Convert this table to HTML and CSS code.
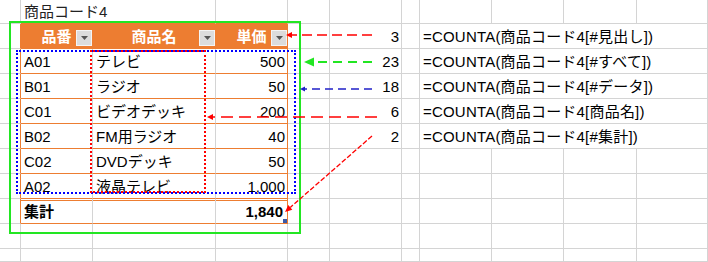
FILE: index.html
```html
<!DOCTYPE html>
<html lang="ja">
<head>
<meta charset="utf-8">
<link rel="stylesheet" href="styles.css">
</head>
<body>
<div class="sheet">
  <!-- row 0 -->
  <div class="c"></div>
  <div class="c span2 otop title">商品コード4</div>
  <div class="c otop"></div>
  <div class="c"></div><div class="c"></div><div class="c"></div><div class="c"></div><div class="c"></div><div class="c"></div><div class="c"></div>
  <!-- row 1 header -->
  <div class="c oleft"></div>
  <div class="c th"><span></span><span class="tht">品番</span><span class="ddw"><span class="dd"><svg width="7" height="4" viewBox="0 0 7 4"><path d="M0 0H7L3.5 4Z" fill="#555"/></svg></span></span></div>
  <div class="c th"><span></span><span class="tht">商品名</span><span class="ddw"><span class="dd"><svg width="7" height="4" viewBox="0 0 7 4"><path d="M0 0H7L3.5 4Z" fill="#555"/></svg></span></span></div>
  <div class="c th"><span></span><span class="tht">単価</span><span class="ddw"><span class="dd"><svg width="7" height="4" viewBox="0 0 7 4"><path d="M0 0H7L3.5 4Z" fill="#555"/></svg></span></span></div>
  <div class="c"></div>
  <div class="c r">3</div>
  <div class="c"></div>
  <div class="c span4 f">=COUNTA(商品コード4[#見出し])</div>
  <!-- row 2 -->
  <div class="c oleft"></div>
  <div class="c td">A01</div>
  <div class="c td">テレビ</div>
  <div class="c td tdl r">500</div>
  <div class="c"></div>
  <div class="c r">23</div>
  <div class="c"></div>
  <div class="c span4 f">=COUNTA(商品コード4[#すべて])</div>
  <!-- row 3 -->
  <div class="c oleft"></div>
  <div class="c td">B01</div>
  <div class="c td">ラジオ</div>
  <div class="c td tdl r">50</div>
  <div class="c"></div>
  <div class="c r">18</div>
  <div class="c"></div>
  <div class="c span4 f">=COUNTA(商品コード4[#データ])</div>
  <!-- row 4 -->
  <div class="c oleft"></div>
  <div class="c td">C01</div>
  <div class="c td">ビデオデッキ</div>
  <div class="c td tdl r">200</div>
  <div class="c"></div>
  <div class="c r">6</div>
  <div class="c"></div>
  <div class="c span4 f">=COUNTA(商品コード4[商品名])</div>
  <!-- row 5 -->
  <div class="c oleft"></div>
  <div class="c td">B02</div>
  <div class="c td">FM用ラジオ</div>
  <div class="c td tdl r">40</div>
  <div class="c"></div>
  <div class="c r">2</div>
  <div class="c"></div>
  <div class="c span4 f">=COUNTA(商品コード4[#集計])</div>
  <!-- row 6 -->
  <div class="c oleft"></div>
  <div class="c td">C02</div>
  <div class="c td">DVDデッキ</div>
  <div class="c td tdl r">50</div>
  <div class="c"></div><div class="c"></div><div class="c"></div><div class="c"></div><div class="c"></div><div class="c"></div><div class="c"></div>
  <!-- row 7 -->
  <div class="c oleft"></div>
  <div class="c td">A02</div>
  <div class="c td">液晶テレビ</div>
  <div class="c td tdl r">1,000</div>
  <div class="c"></div><div class="c"></div><div class="c"></div><div class="c"></div><div class="c"></div><div class="c"></div><div class="c"></div>
  <!-- row 8 total -->
  <div class="c oleft"></div>
  <div class="c tot">集計</div>
  <div class="c tot"></div>
  <div class="c tot tdl r totnum">1,840<span class="fh"></span></div>
  <div class="c"></div><div class="c"></div><div class="c"></div><div class="c"></div><div class="c"></div><div class="c"></div><div class="c"></div>
  <!-- row 9 -->
  <div class="c"></div><div class="c"></div><div class="c"></div><div class="c"></div><div class="c"></div><div class="c"></div><div class="c"></div><div class="c"></div><div class="c"></div><div class="c"></div><div class="c"></div>
  <!-- row 10 -->
  <div class="c"></div><div class="c"></div><div class="c"></div><div class="c"></div><div class="c"></div><div class="c"></div><div class="c"></div><div class="c"></div><div class="c"></div><div class="c"></div><div class="c"></div>

  <div class="box-green"></div>
  <div class="box-blue"></div>
  <div class="box-red"></div>

  <svg class="arrows" width="708" height="262" viewBox="0 0 708 262">
    <line x1="372" y1="35" x2="291" y2="35" stroke="#ff0000" stroke-width="1.5" stroke-dasharray="10 5"/>
    <polygon points="286,35 292,32 292,38" fill="#ff0000"/>
    <line x1="372" y1="62" x2="313" y2="62" stroke="#22e622" stroke-width="2" stroke-dasharray="9 6"/>
    <polygon points="304,62 314,57.5 314,66.5" fill="#22e622"/>
    <line x1="372" y1="89" x2="303" y2="89" stroke="#2020c8" stroke-width="1.3" stroke-dasharray="8 5"/>
    <polygon points="300,89 305,86.5 305,91.5" fill="#2020c8"/>
    <line x1="377" y1="117" x2="212" y2="117" stroke="#ff0000" stroke-width="1.5" stroke-dasharray="12 6"/>
    <polygon points="207,117 213,114 213,120" fill="#ff0000"/>
    <line x1="372" y1="136" x2="290.3" y2="207.4" stroke="#ff0000" stroke-width="1.3" stroke-dasharray="5 2"/>
    <polygon points="285,212 292.3,209.7 288.3,205.1" fill="#ff0000"/>
  </svg>
</div>
</body>
</html>
```

FILE: styles.css
```css
* { box-sizing: border-box; margin: 0; padding: 0; }
body {
  margin: 0;
  background: #fff;
  font-family: "Liberation Sans", "Noto Sans CJK JP", sans-serif;
  font-size: 15px;
  color: #000;
}
.sheet {
  position: relative;
  width: 708px;
  height: 262px;
  display: grid;
  grid-template-columns: 21px 72px 123px 72px 42px 72px 18px 72px 72px 73px 71px;
  grid-template-rows: 24px repeat(9, 25px) 13px;
  overflow: hidden;
}
.c {
  border-right: 1px solid #d4d4d4;
  border-bottom: 1px solid #d4d4d4;
  display: flex;
  align-items: center;
  padding: 0 3px;
  white-space: nowrap;
  line-height: 1;
  min-width: 0;
}
.span2 { grid-column: span 2; }
.span4 { grid-column: span 4; }
.f { letter-spacing: 0.2px; }
.r { justify-content: flex-end; padding-right: 2px; }
.title { color: #222; }
.otop { border-bottom-color: #ed7d31; }
.oleft { border-right-color: #ed7d31; }
.th {
  background: #ed7d31;
  border-color: #ed7d31;
  color: #fff;
  font-weight: bold;
  display: grid;
  grid-template-columns: 1fr auto 1fr;
  align-items: center;
  padding: 0;
}
.tht { white-space: nowrap; }
.ddw {
  justify-self: end;
  align-self: end;
  margin-bottom: 2px;
  display: flex;
}
.dd {
  width: 16px;
  height: 16px;
  background: #dcdcdc;
  border: 1px solid #f4f4f4;
  display: flex;
  align-items: center;
  justify-content: center;
}
.dd svg { display: block; }
.td { border-bottom-color: #ed7d31; }
.tdl { border-right-color: #ed7d31; }
.tot {
  border-bottom-color: #ed7d31;
  box-shadow: inset 0 1px 0 #fff, inset 0 2px 0 #ed7d31;
  font-weight: bold;
}
.totnum { position: relative; padding-right: 4px; }
.fh {
  position: absolute;
  right: 0;
  bottom: 0;
  width: 4px;
  height: 4px;
  background: #3b5aa8;
}
.box-green {
  position: absolute;
  left: 9px;
  top: 21px;
  width: 292px;
  height: 213px;
  border: 2px solid #22e622;
}
.box-blue {
  position: absolute;
  left: 16px;
  top: 50px;
  width: 280px;
  height: 144px;
  border: 2px dotted #0000ff;
}
.box-red {
  position: absolute;
  left: 90px;
  top: 50px;
  width: 116px;
  height: 143px;
  border: 2px dotted #ff0000;
}
.arrows {
  position: absolute;
  left: 0;
  top: 0;
  pointer-events: none;
}
```
